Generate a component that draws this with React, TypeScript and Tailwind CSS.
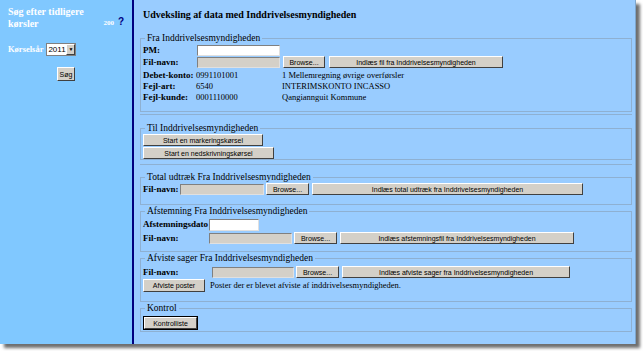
import React from 'react'

const Btn = ({ children, className = '' }: { children: React.ReactNode; className?: string }) => (
  <button
    className={`h-[12px] shrink-0 whitespace-nowrap bg-[#d4d0c8] border border-t-white border-l-white border-b-[#404040] border-r-[#404040] text-[7px] leading-none text-black font-['Liberation_Sans'] ${className}`}
  >
    {children}
  </button>
)

const Input = ({ className = '', disabled = false }: { className?: string; disabled?: boolean }) => (
  <div
    className={`h-[11px] shrink-0 border border-t-[#808080] border-l-[#808080] border-b-[#e0e0e0] border-r-[#e0e0e0] ${disabled ? 'bg-[#d4d0c8]' : 'bg-white'} ${className}`}
  />
)

const Section = ({ title, children, className = '' }: { title: string; children: React.ReactNode; className?: string }) => (
  <fieldset className={`border border-[#8eb0d2] px-[2px] ${className}`}>
    <legend className="px-[2px] ml-[2px] text-[9.5px] leading-[12px] text-black">{title}</legend>
    {children}
  </fieldset>
)

const Divider = ({ className = '' }: { className?: string }) => <div className={`h-px bg-[#8eb0d2] ${className}`} />

const Label = ({ children, className = '' }: { children: React.ReactNode; className?: string }) => (
  <span className={`shrink-0 whitespace-nowrap text-[9px] font-bold leading-none text-black ${className}`}>{children}</span>
)

const FileRow = ({ labelW, inputW, browseW, loadW, loadText, className = '' }: { labelW: string; inputW: string; browseW: string; loadW: string; loadText: string; className?: string }) => (
  <div className={`flex items-center gap-[2px] h-[12px] ${className}`}>
    <Label className={labelW}>Fil-navn:</Label>
    <Input disabled className={inputW} />
    <Btn className={browseW}>Browse...</Btn>
    <Btn className={`${loadW} ml-[1px]`}>{loadText}</Btn>
  </div>
)

export default function App() {
  return (
    <div className="w-[643px] h-[351px] bg-white font-['Liberation_Serif']">
      <div className="w-[636px] h-[344px] flex shadow-[4px_4px_3px_#6f6f6f]">
        {/* sidebar */}
        <aside className="w-[134px] shrink-0 bg-[#80c8ff] border-r-2 border-[#000080] px-[8px] pt-[6px]">
          <div className="flex items-end">
            <div className="w-[101px] text-[10px] leading-[12px] font-bold text-white">Søg efter tidligere kørsler</div>
            <span className="ml-[2px] mb-[2px] text-[7px] font-bold text-white">200</span>
            <span className="ml-[4px] mb-[1px] text-[10px] font-bold text-[#000080] font-['Liberation_Sans']">?</span>
          </div>
          <div className="flex items-center mt-[13px]">
            <span className="text-[8.5px] font-bold text-white">Kørselsår</span>
            <div className="ml-[3px] flex items-center h-[13px] w-[30px] bg-white border border-[#808080]">
              <span className="flex-1 pl-[1px] text-[8px] leading-none font-['Liberation_Sans']">2011</span>
              <span className="w-[9px] h-[11px] bg-[#d4d0c8] border border-t-white border-l-white border-b-[#404040] border-r-[#404040] flex items-center justify-center text-[5px] leading-none">▼</span>
            </div>
          </div>
          <div className="flex justify-center mt-[11px]">
            <Btn className="w-[18px] h-[14px]">Søg</Btn>
          </div>
        </aside>

        {/* main */}
        <main className="flex-1 bg-[#99ccff] border-r border-[#7fa6cc] pl-[6px] pr-[3px] pt-[9px]">
          <h1 className="ml-[3px] text-[10px] font-bold leading-[12px] text-black">Udveksling af data med Inddrivelsesmyndigheden</h1>

          <Section title="Fra Inddrivelsesmyndigheden" className="mt-[11px] pb-[8px]">
            <div className="flex flex-col">
              <div className="flex items-center h-[12px]">
                <Label className="w-[54px]">PM:</Label>
                <Input className="w-[83px]" />
              </div>
              <div className="flex items-center gap-[3px] h-[12px]">
                <Label className="w-[51px]">Fil-navn:</Label>
                <Input disabled className="w-[83px] h-[10px]" />
                <Btn className="w-[42px] h-[11px]">Browse...</Btn>
                <Btn className="w-[174px] h-[11px] ml-[1px]">Indlæs fil fra Inddrivelsesmyndigheden</Btn>
              </div>
              <div className="mt-[2px] flex flex-col">
                {[
                  ['Debet-konto:', '0991101001', '1 Mellemregning øvrige overførsler'],
                  ['Fejl-art:', '6540', 'INTERIMSKONTO INCASSO'],
                  ['Fejl-kunde:', '0001110000', 'Qangiannguit Kommune'],
                ].map(([l, v, d]) => (
                  <div key={l} className="flex items-center h-[11px] text-[8.5px] leading-none">
                    <Label className="w-[53px]">{l}</Label>
                    <span className="w-[86px]">{v}</span>
                    <span>{d}</span>
                  </div>
                ))}
              </div>
            </div>
          </Section>
          <Divider className="mt-[2px]" />

          <Section title="Til Inddrivelsesmyndigheden" className="mt-[7px] pb-0">
            <div className="flex flex-col gap-[1px]">
              <Btn className="w-[120px]">Start en markeringskørsel</Btn>
              <Btn className="w-[131px]">Start en nedskrivningskørsel</Btn>
            </div>
          </Section>
          <Divider className="mt-[4px]" />

          <Section title="Total udtræk Fra Inddrivelsesmyndigheden" className="mt-[6px] pb-[9px]">
            <FileRow labelW="w-[35px]" inputW="w-[84px]" browseW="w-[43px]" loadW="w-[271px]" loadText="Indlæs total udtræk fra Inddrivelsesmyndigheden" />
          </Section>

          <Section title="Afstemning Fra Inddrivelsesmyndigheden" className="pb-[7px]">
            <div className="flex items-center h-[13px] mt-[1px]">
              <Label className="w-[66px]">Afstemningsdato</Label>
              <Input className="w-[50px] h-[12px]" />
            </div>
            <FileRow className="mt-[1px]" labelW="w-[64px]" inputW="w-[83px]" browseW="w-[43px]" loadW="w-[234px]" loadText="Indlæs afstemningsfil fra Inddrivelsesmyndigheden" />
          </Section>

          <Section title="Afviste sager Fra Inddrivelsesmyndigheden" className="pb-[9px]">
            <FileRow className="mt-[2px]" labelW="w-[67px]" inputW="w-[82px]" browseW="w-[43px]" loadW="w-[228px]" loadText="Indlæs afviste sager fra Inddrivelsesmyndigheden" />
            <div className="flex items-center mt-[1px]">
              <Btn className="w-[62px] h-[13px]">Afviste poster</Btn>
              <span className="ml-[5px] text-[8.5px] leading-none">Poster der er blevet afviste af inddrivelsesmyndigheden.</span>
            </div>
          </Section>

          <Section title="Kontrol" className="pb-[2px]">
            <div className="flex mt-[3px] ml-[1px]">
              <Btn className="w-[53px] border-[#202020] outline outline-1 outline-black">Kontrolliste</Btn>
            </div>
          </Section>
        </main>
      </div>
    </div>
  )
}
